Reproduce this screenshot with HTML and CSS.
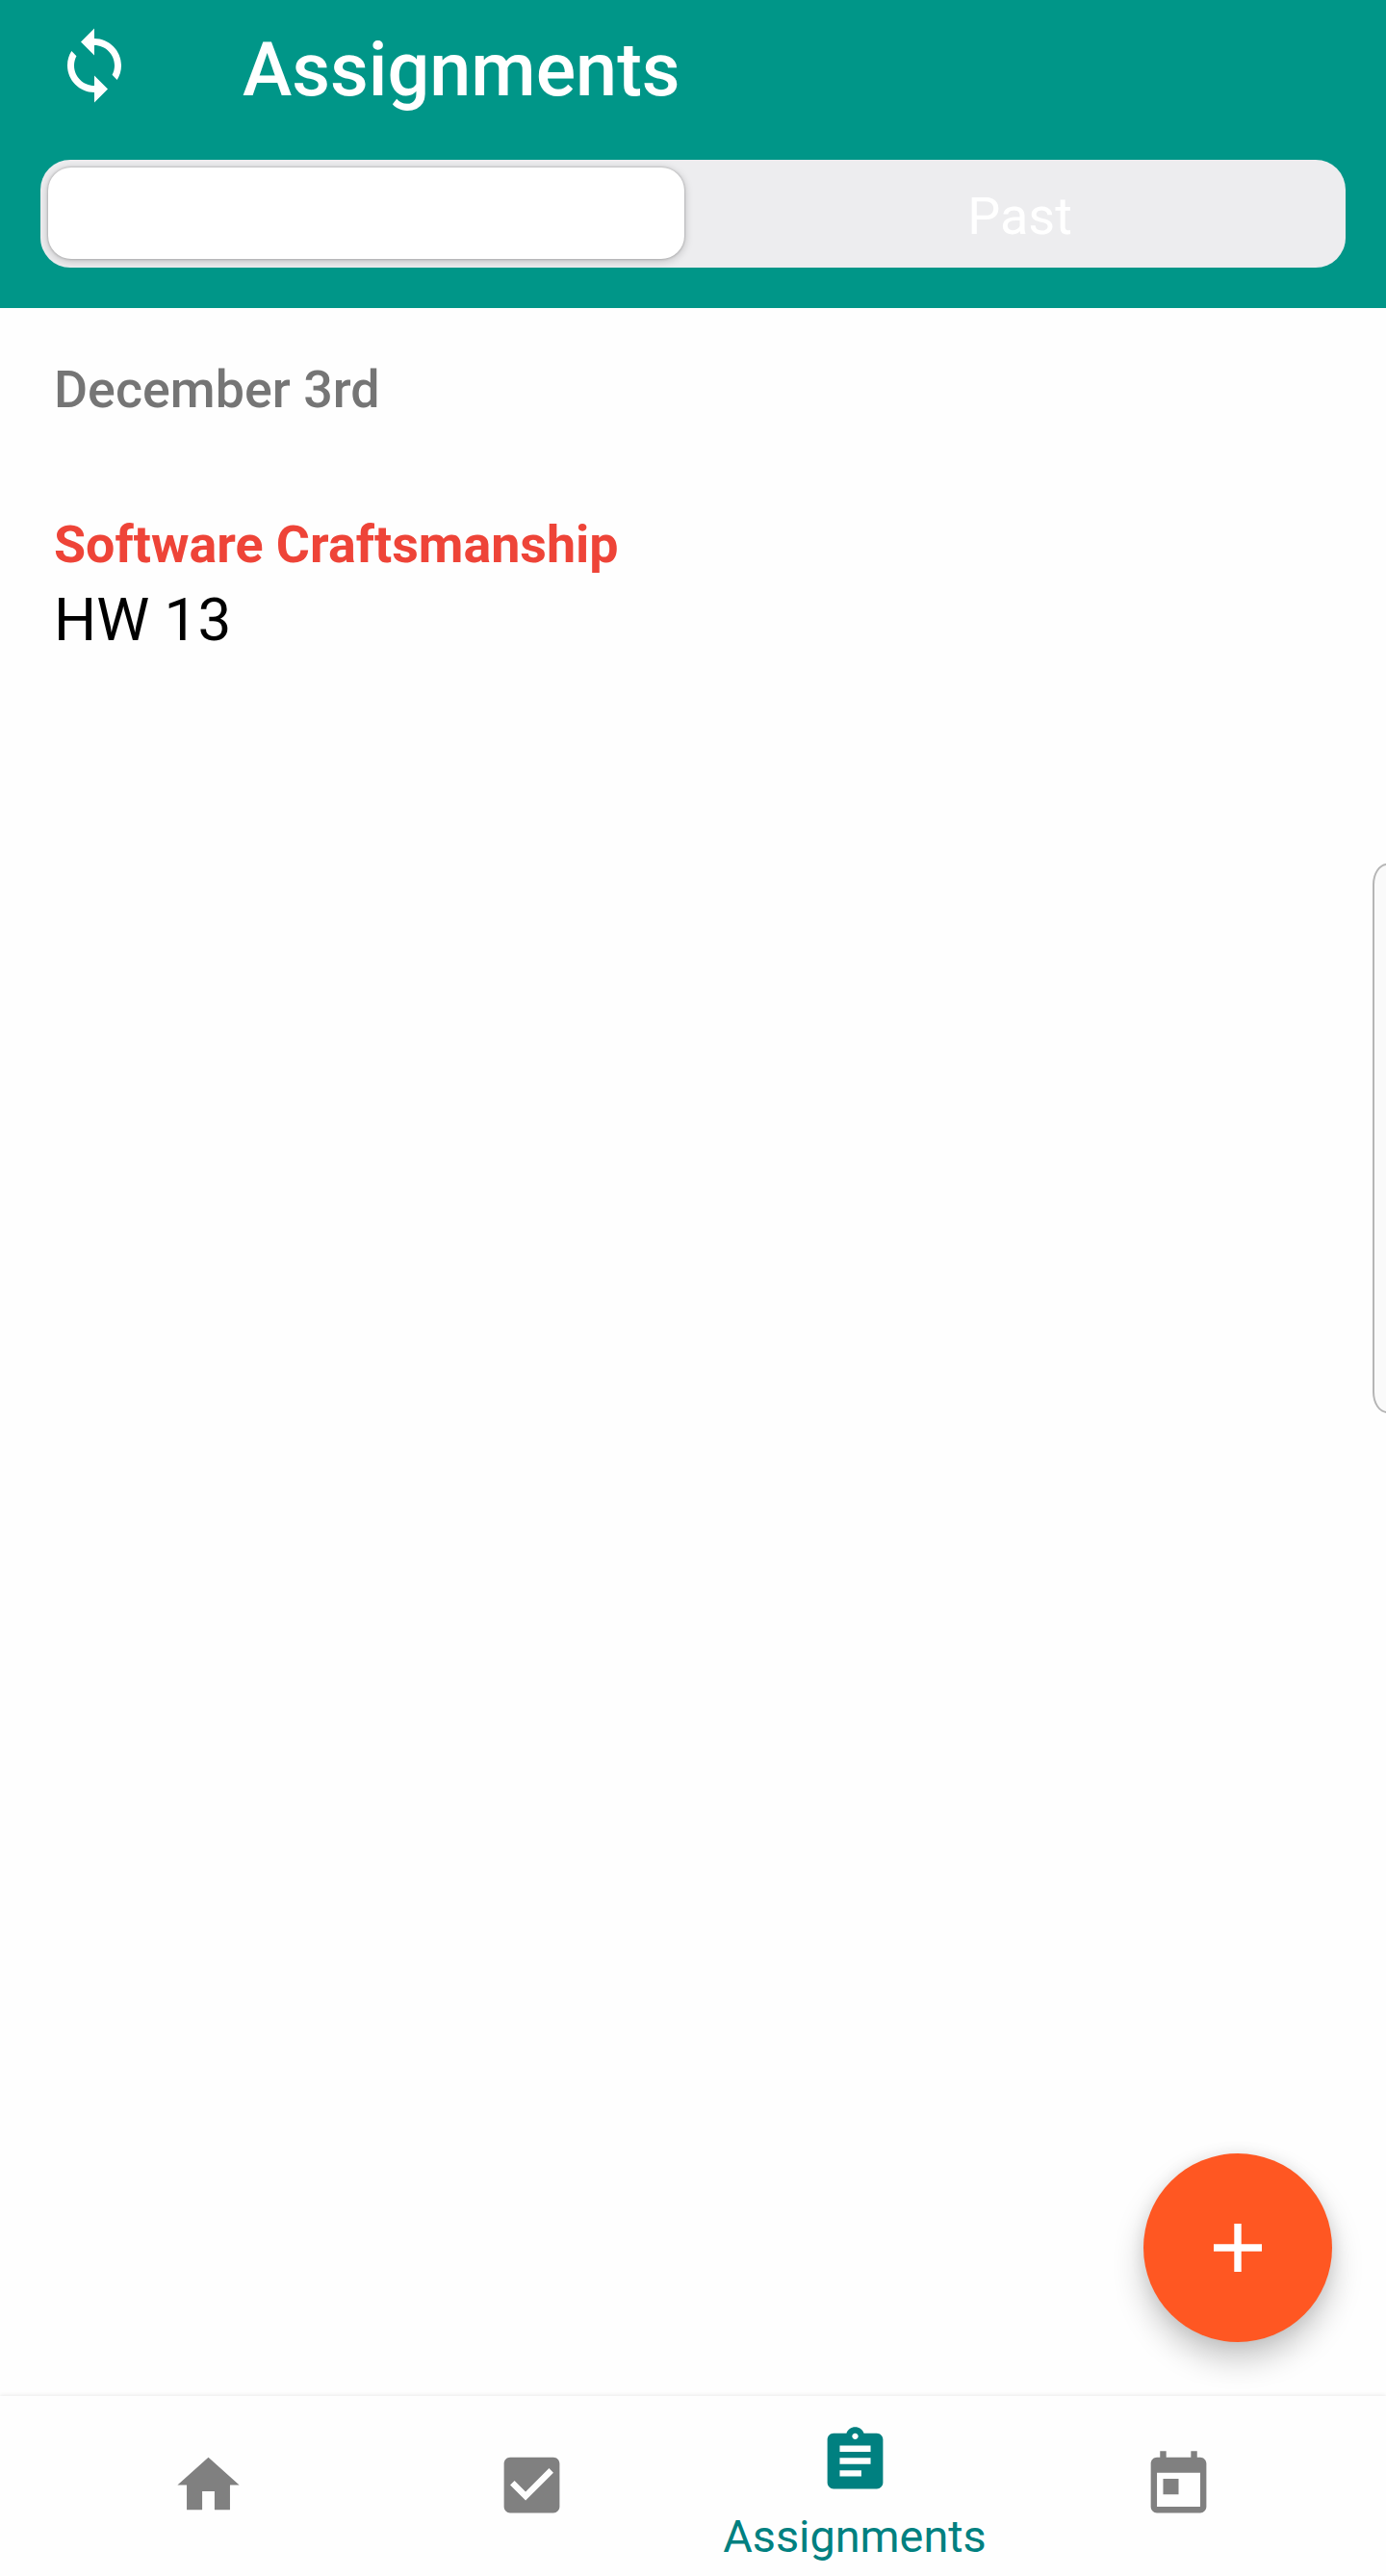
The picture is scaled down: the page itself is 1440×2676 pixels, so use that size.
FILE: index.html
```html
<!DOCTYPE html>
<html lang="en">
<head>
<meta charset="utf-8">
<title>Assignments</title>
<link rel="stylesheet" href="styles.css">
</head>
<body>
<div class="app">
  <header class="header">
    <div class="toolbar">
      <svg class="sync" viewBox="0 0 24 24"><path d="M12 4V1L8 5l4 4V6c3.31 0 6 2.69 6 6 0 1.01-.25 1.97-.7 2.8l1.46 1.46C19.54 15.03 20 13.57 20 12c0-4.42-3.58-8-8-8zm0 14c-3.31 0-6-2.69-6-6 0-1.01.25-1.97.7-2.8L5.24 7.74C4.46 8.97 4 10.43 4 12c0 4.42 3.58 8 8 8v3l4-4-4-4v3z"/></svg>
      <h1 class="title">Assignments</h1>
    </div>
    <div class="segments">
      <div class="segment segment-active"></div>
      <div class="segment segment-past">Past</div>
    </div>
  </header>
  <main class="content">
    <h2 class="date">December 3rd</h2>
    <article class="assignment">
      <h3 class="course">Software Craftsmanship</h3>
      <p class="task">HW 13</p>
    </article>
  </main>
  <nav class="nav">
    <a class="tab"><svg class="icon" viewBox="0 0 24 24"><path d="M10 20v-6h4v6h5v-8h3L12 3 2 12h3v8z"/></svg></a>
    <a class="tab"><svg class="icon" viewBox="0 0 24 24"><path d="M19 3H5c-1.11 0-2 .9-2 2v14c0 1.1.89 2 2 2h14c1.11 0 2-.9 2-2V5c0-1.1-.89-2-2-2zm-9 14l-5-5 1.41-1.41L10 14.17l7.59-7.59L19 8l-9 9z"/></svg></a>
    <a class="tab tab-active"><svg class="icon" viewBox="0 0 24 24"><path d="M19 3h-4.18C14.4 1.84 13.3 1 12 1c-1.3 0-2.4.84-2.82 2H5c-1.1 0-2 .9-2 2v14c0 1.1.9 2 2 2h14c1.1 0 2-.9 2-2V5c0-1.1-.9-2-2-2zm-7 0c.55 0 1 .45 1 1s-.45 1-1 1-1-.45-1-1 .45-1 1-1zm2 14H7v-2h7v2zm3-4H7v-2h10v2zm0-4H7V7h10v2z"/></svg><span class="label">Assignments</span></a>
    <a class="tab"><svg class="icon" viewBox="0 0 24 24"><path d="M19 3h-1V1h-2v2H8V1H6v2H5c-1.11 0-1.99.9-1.99 2L3 19c0 1.1.89 2 2 2h14c1.1 0 2-.9 2-2V5c0-1.1-.9-2-2-2zm0 16H5V8h14v11zM7 10h5v5H7z"/></svg></a>
  </nav>
  <div class="edge-handle"></div>
  <div class="fab"><svg class="plus" viewBox="0 0 50 50"><path d="M21.3 0h7.4v21.3H50v7.4H28.7V50h-7.4V28.7H0v-7.4h21.3z"/></svg></div>
</div>
</body>
</html>
```
FILE: styles.css
```css
* { box-sizing: border-box; margin: 0; padding: 0; }
body { background: #fefefe; font-family: Roboto, sans-serif; }
.app {
  position: relative;
  display: flex;
  flex-direction: column;
  width: 1440px;
  height: 2676px;
  overflow: hidden;
}
.header { height: 320px; background: #009688; padding: 0 42px; }
.toolbar { display: flex; align-items: center; height: 166px; padding: 0 14px 20px; }
.sync { width: 84px; height: 84px; margin-top: -10px; fill: #fff; }
.title { margin-left: 112px; font-size: 77.3px; font-weight: 500; line-height: 90px; color: #fff; }
.segments {
  display: flex;
  height: 112px;
  padding: 8px 9px 9px 8px;
  border-radius: 31px;
  background: #ededef;
  overflow: hidden;
}
.segment {
  flex: 1;
  display: flex;
  align-items: center;
  justify-content: center;
  font-size: 54px;
  line-height: 64px;
  color: #fff;
}
.segment-active {
  flex: 0 0 661px;
  border-radius: 24px;
  background: #fff;
  box-shadow: 0 0 2px 1px rgba(0, 0, 0, .14), 0 2px 10px rgba(0, 0, 0, .22);
}
.segment-past { padding: 7px 0 0 19px; }
.content { flex: 1; padding: 53px 56px; }
.date { font-size: 53.8px; font-weight: 500; line-height: 64px; color: #757575; }
.assignment { margin-top: 97px; }
.course { font-size: 53.8px; font-weight: 700; line-height: 64px; color: #ee4438; }
.task { margin-top: 9px; font-size: 62px; line-height: 74px; color: #000; }
.nav {
  display: flex;
  height: 187px;
  padding: 0 48px;
  background: #fefefe;
  box-shadow: 0 -1px 4px rgba(0, 0, 0, .08);
}
.tab {
  flex: 1;
  display: flex;
  flex-direction: column;
  align-items: center;
  padding-top: 54px;
}
.tab-active { padding-top: 29px; }
.icon { flex: none; width: 77px; height: 77px; fill: #808080; }
.tab-active .icon { fill: #008080; }
.label { margin-top: 12px; font-size: 46.8px; line-height: 56px; color: #008080; }
.edge-handle {
  position: absolute;
  top: 897px;
  left: 1426px;
  width: 30px;
  height: 571px;
  border: 2px solid #b5b5b5;
  border-radius: 15px / 22px;
  background: #fafafa;
}
.fab {
  position: absolute;
  top: 2237px;
  left: 1188px;
  display: flex;
  align-items: center;
  justify-content: center;
  width: 196px;
  height: 196px;
  border-radius: 50%;
  background: #ff5722;
  box-shadow: 0 18px 32px rgba(0, 0, 0, .22), 0 0 16px rgba(0, 0, 0, .08);
}
.plus { width: 50px; height: 50px; fill: #fff; }
```
